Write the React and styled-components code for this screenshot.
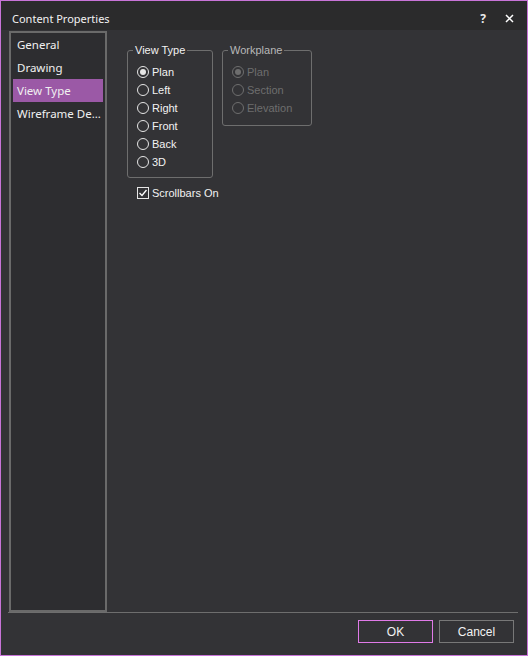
import React from "react"
import styled, { createGlobalStyle, css } from "styled-components"

const GlobalStyle = createGlobalStyle`
  html, body {
    margin: 0;
    padding: 0;
    background: #333336;
  }
  * {
    box-sizing: border-box;
  }
`

const Window = styled.div`
  width: 528px;
  height: 656px;
  display: flex;
  flex-direction: column;
  background: #333336;
  border: 1px solid #c874d8;
  font-family: "Liberation Sans", Arial, sans-serif;
  font-size: 11px;
  color: #f2f2f2;
`

const TitleBar = styled.div`
  height: 29px;
  flex-shrink: 0;
  display: flex;
  align-items: center;
  justify-content: space-between;
  padding: 5px 13px 0 11px;
  background: #2b2b2c;
`

const Title = styled.span`
  font-family: "Noto Sans", "Liberation Sans", sans-serif;
  font-size: 11px;
  color: #f2f2f2;
`

const TitleButtons = styled.div`
  display: flex;
  align-items: center;
  gap: 19px;
`

const HelpButton = styled.span`
  font-family: "Noto Sans", sans-serif;
  font-size: 12px;
  font-weight: 700;
  color: #eaeaea;
`

const Body = styled.div`
  flex: 1;
  display: flex;
  padding: 1px 0 0 8px;
  min-height: 0;
`

const Sidebar = styled.ul`
  width: 98px;
  margin: 0;
  padding: 0 2px;
  list-style: none;
  background: #2d2d30;
  border: 2px solid #6a6a6a;
  flex-shrink: 0;
`

const NavItem = styled.li`
  height: 23px;
  line-height: 23px;
  padding-left: 4px;
  font-family: "Noto Sans", "Liberation Sans", sans-serif;
  font-size: 11.5px;
  white-space: nowrap;
  overflow: hidden;
  color: #f0f0f0;
  ${props => props.isActive
    && css`
      background: #9b59a6;
    `}
`

const Content = styled.div`
  flex: 1;
  padding: 13px 0 0 20px;
`

const GroupRow = styled.div`
  display: flex;
  align-items: flex-start;
  gap: 9px;
`

const Group = styled.fieldset`
  margin: 0;
  width: ${props => props.$width}px;
  height: ${props => props.$height}px;
  padding: 7px 0 0 9px;
  border: 1px solid #6e6e6e;
  border-radius: 3px;
`

const Legend = styled.legend`
  padding: 0 2px;
  margin-left: -4px;
  font-size: 11px;
  color: ${props => (props.disabled ? "#b8b8b8" : "#f2f2f2")};
`

const OptionRow = styled.label`
  height: 18px;
  display: flex;
  align-items: center;
  gap: 3px;
  color: ${props => (props.disabled ? "#6e6e6e" : "#f2f2f2")};
`

const RadioCircle = styled.span`
  width: 12px;
  height: 12px;
  border-radius: 50%;
  border: 1px solid ${props => (props.disabled ? "#6e6e6e" : "#e6e6e6")};
  display: flex;
  align-items: center;
  justify-content: center;
  flex-shrink: 0;
  &::after {
    content: "";
    width: 6px;
    height: 6px;
    border-radius: 50%;
    background: ${props => (props.disabled ? "#6e6e6e" : "#e6e6e6")};
    display: ${props => (props.checked ? "block" : "none")};
  }
`

const CheckRow = styled.label`
  display: flex;
  align-items: center;
  gap: 3px;
  margin: 8px 0 0 10px;
  height: 14px;
`

const CheckBox = styled.span`
  width: 12px;
  height: 12px;
  border: 1px solid #e6e6e6;
  display: flex;
  align-items: center;
  justify-content: center;
`

const Separator = styled.div`
  height: 1px;
  margin: 0 9px 0 7px;
  background: #6e6e6e;
  flex-shrink: 0;
`

const Footer = styled.div`
  height: 42px;
  flex-shrink: 0;
  display: flex;
  justify-content: flex-end;
  gap: 6px;
  padding: 7px 13px 0 0;
`

const Button = styled.button`
  width: 75px;
  height: 23px;
  background: #333336;
  color: #f2f2f2;
  font-family: "Liberation Sans", Arial, sans-serif;
  font-size: 12px;
  border: 1px solid ${props => (props.primary ? "#e07ae8" : "#787878")};
  padding: 0;
`

const Radio = ({ label, checked, disabled }) => (
  <OptionRow disabled={disabled}>
    <RadioCircle checked={checked} disabled={disabled} />
    {label}
  </OptionRow>
)

const navItems = ["General", "Drawing", "View Type", "Wireframe Defaults"]
const viewTypes = ["Plan", "Left", "Right", "Front", "Back", "3D"]
const workplanes = ["Plan", "Section", "Elevation"]

export default function App() {
  return (
    <>
      <GlobalStyle />
      <Window>
        <TitleBar>
          <Title>Content Properties</Title>
          <TitleButtons>
            <HelpButton>?</HelpButton>
            <svg width="9" height="9" viewBox="0 0 9 9">
              <path d="M1 1 L8 8 M8 1 L1 8" stroke="#ffffff" strokeWidth="1.5" />
            </svg>
          </TitleButtons>
        </TitleBar>
        <Body>
          <Sidebar>
            {navItems.map(item => (
              <NavItem key={item} isActive={item === "View Type"}>
                {item === "Wireframe Defaults" ? "Wireframe De..." : item}
              </NavItem>
            ))}
          </Sidebar>
          <Content>
            <GroupRow>
              <Group $width={86} $height={134}>
                <Legend>View Type</Legend>
                {viewTypes.map(v => (
                  <Radio key={v} label={v} checked={v === "Plan"} />
                ))}
              </Group>
              <Group $width={90} $height={82}>
                <Legend disabled>Workplane</Legend>
                {workplanes.map(w => (
                  <Radio key={w} label={w} checked={w === "Plan"} disabled />
                ))}
              </Group>
            </GroupRow>
            <CheckRow>
              <CheckBox>
                <svg width="10" height="10" viewBox="0 0 10 10">
                  <path d="M1.5 5 L4 7.5 L8.5 2" stroke="#ffffff" strokeWidth="1.3" fill="none" />
                </svg>
              </CheckBox>
              Scrollbars On
            </CheckRow>
          </Content>
        </Body>
        <Separator />
        <Footer>
          <Button primary>OK</Button>
          <Button>Cancel</Button>
        </Footer>
      </Window>
    </>
  )
}
